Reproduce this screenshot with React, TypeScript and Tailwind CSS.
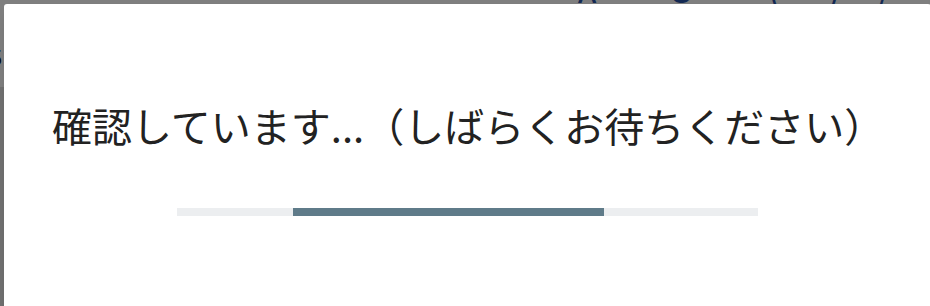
import React from 'react';

const font = { fontFamily: '"Noto Sans CJK JP", "Noto Sans", sans-serif' };

export default function App() {
  return (
    <div className="relative w-[930px] h-[306px] overflow-hidden bg-white" style={font}>
      {/* page behind the overlay */}
      <div className="flex flex-col h-full">
        <div className="flex items-end h-[40px] -mt-[35px] text-[36px] leading-none text-[#2753a6]">
          <span className="ml-[578px] w-[90px]">ʌ</span>
          <span className="w-[100px]">O</span>
          <span className="w-[60px]">(</span>
          <span className="w-[50px]">)</span>
          <span>/</span>
        </div>
        <div className="text-[22px] leading-none text-[#111] -ml-[10px] mt-[40px]">5</div>
        <div className="flex-1 mt-[20px] bg-[#e2e2e2]" />
      </div>

      {/* backdrop */}
      <div className="absolute inset-0 bg-black/50" />

      {/* dialog */}
      <div className="absolute left-[4px] top-[4px] w-[927px] h-[320px] bg-white rounded-[3px] shadow-lg">
        <div className="pl-[48px] pt-[96px]">
          <p className="text-[40px] leading-[50px] text-[#222] whitespace-nowrap">
            確認しています...（しばらくお待ちください）
          </p>
        </div>
        <div className="mt-[58px] mx-auto w-[581px] h-[8px] bg-[#eceef0] flex">
          <div className="ml-[116px] w-[311px] h-full bg-[#5f7b89]" />
        </div>
      </div>
    </div>
  );
}
